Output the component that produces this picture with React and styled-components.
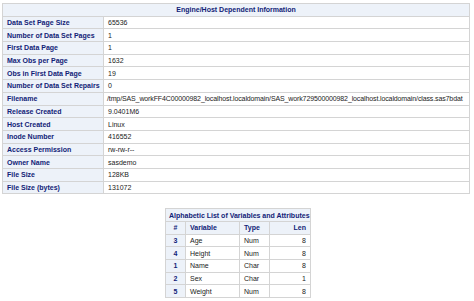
import React from 'react'
import styled, { createGlobalStyle } from 'styled-components'

const GlobalStyle = createGlobalStyle`
  html, body {
    margin: 0;
    padding: 0;
    background: #fff;
  }
  body {
    font-family: "Liberation Sans", Arial, sans-serif;
  }
`

const engineRows = [
  ['Data Set Page Size', '65536'],
  ['Number of Data Set Pages', '1'],
  ['First Data Page', '1'],
  ['Max Obs per Page', '1632'],
  ['Obs in First Data Page', '19'],
  ['Number of Data Set Repairs', '0'],
  ['Filename', '/tmp/SAS_workFF4C00000982_localhost.localdomain/SAS_work729500000982_localhost.localdomain/class.sas7bdat'],
  ['Release Created', '9.0401M6'],
  ['Host Created', 'Linux'],
  ['Inode Number', '416552'],
  ['Access Permission', 'rw-rw-r--'],
  ['Owner Name', 'sasdemo'],
  ['File Size', '128KB'],
  ['File Size (bytes)', '131072'],
]

const variables = [
  ['3', 'Age', 'Num', '8'],
  ['4', 'Height', 'Num', '8'],
  ['1', 'Name', 'Char', '8'],
  ['2', 'Sex', 'Char', '1'],
  ['5', 'Weight', 'Num', '8'],
]

function App() {
  return (
    <Page>
      <GlobalStyle />
      <Table width={468}>
        <colgroup>
          <col style={{ width: 101 }} />
          <col />
        </colgroup>
        <thead>
          <Row>
            <Title colSpan={2}>Engine/Host Dependent Information</Title>
          </Row>
        </thead>
        <tbody>
          {engineRows.map(([label, value]) => (
            <Row key={label}>
              <Label>{label}</Label>
              <Cell tight={value.length > 60}>{value}</Cell>
            </Row>
          ))}
        </tbody>
      </Table>

      <Table width={146} centered>
        <colgroup>
          <col style={{ width: 20 }} />
          <col style={{ width: 54 }} />
          <col style={{ width: 30 }} />
          <col />
        </colgroup>
        <thead>
          <Row>
            <Title colSpan={4}>Alphabetic List of Variables and Attributes</Title>
          </Row>
          <Row>
            <Head align="center">#</Head>
            <Head>Variable</Head>
            <Head>Type</Head>
            <Head align="right">Len</Head>
          </Row>
        </thead>
        <tbody>
          {variables.map(([num, name, type, len]) => (
            <Row key={name}>
              <Label align="center">{num}</Label>
              <Cell>{name}</Cell>
              <Cell>{type}</Cell>
              <Cell align="right">{len}</Cell>
            </Row>
          ))}
        </tbody>
      </Table>
    </Page>
  )
}

export default App

const Page = styled.div`
  display: flex;
  flex-direction: column;
  gap: 14px;
  padding: 3px 0 0 2px;
  width: 472px;
`

const Table = styled.table`
  width: ${props => props.width}px;
  table-layout: fixed;
  border-collapse: collapse;
  border: 1px solid #d4d4d4;
  font-size: 7px;
  align-self: ${props => props.centered ? 'center' : 'flex-start'};
`

const Row = styled.tr`
  height: 12.7px;
`

const Title = styled.th`
  background: #edf2f9;
  color: #112277;
  font-weight: bold;
  text-align: center;
  padding: 0 3px;
  border: 1px solid #d4d4d4;
  white-space: nowrap;
`

const Head = styled.th`
  background: #edf2f9;
  color: #112277;
  font-weight: bold;
  text-align: ${props => props.align || 'left'};
  padding: 0 4px;
  border: 1px solid #d4d4d4;
  white-space: nowrap;
`

const Label = styled.th`
  background: #edf2f9;
  color: #112277;
  font-weight: bold;
  text-align: ${props => props.align || 'left'};
  padding: 0 4px;
  border: 1px solid #d4d4d4;
  white-space: nowrap;
  overflow: hidden;
`

const Cell = styled.td`
  background: #fff;
  color: #222;
  text-align: ${props => props.align || 'left'};
  padding: 0 ${props => props.tight ? '2px 0 3px' : '4px'};
  letter-spacing: ${props => props.tight ? '-0.12px' : 'normal'};
  border: 1px solid #d4d4d4;
  white-space: nowrap;
  overflow: hidden;
`
